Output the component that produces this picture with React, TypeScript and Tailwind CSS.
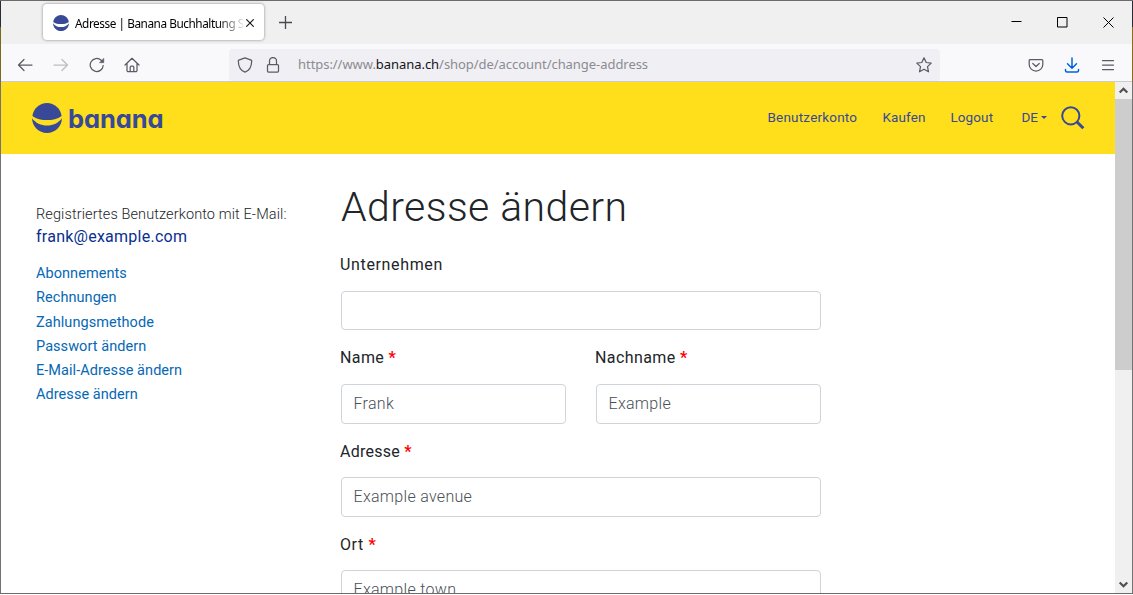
import type { ReactNode } from 'react';

const navLinks = ['Abonnements', 'Rechnungen', 'Zahlungsmethode', 'Passwort ändern', 'E-Mail-Adresse ändern', 'Adresse ändern'];

function Globe({ className }: { className: string }) {
  return (
    <svg viewBox="0 0 30 30" className={className} fill="#374997">
      <path d="M.4 12.9C1.4 5.5 7.6 0 15 0s13.600 5.500 14.600 12.900C25.500 15.900 20.500 17.100 15 17.100S4.500 15.900.4 12.900z" />
      <path d="M0 15.300C3.600 20 9 22.600 15 22.600s11.400-2.600 15-7.300C29.800 23.500 23.200 30 15 30S.2 23.500 0 15.300z" />
    </svg>
  );
}

function Icon({ children, className }: { children: ReactNode; className: string }) {
  return (
    <svg viewBox="0 0 16 16" fill="none" stroke="currentColor" strokeWidth="1.25" strokeLinecap="round" strokeLinejoin="round" className={`size-4 shrink-0 ${className}`}>
      {children}
    </svg>
  );
}

function TitleBar() {
  return (
    <div className="flex h-[43px] shrink-0 items-start bg-[#f0f0f0]">
      <div className="ml-[42px] mt-[3px] flex h-9 w-[221px] items-center rounded bg-white pl-[10px] shadow-[0_0_3px_rgba(0,0,0,0.45)]">
        <Globe className="mt-px size-4 shrink-0" />
        <div className="ml-[6px] mt-[3px] w-[168px] whitespace-nowrap bg-linear-to-r from-black from-85% to-black/10 bg-clip-text font-['Noto_Sans'] text-[11.800px] tracking-[-0.450px] text-transparent">
          Adresse | Banana Buchhaltung S
        </div>
        <svg viewBox="0 0 8 8" className="ml-[3px] mt-[2px] size-2 shrink-0" stroke="#15141a" strokeWidth="1.1"><path d="M.3.3l7.400 7.400M7.700.3L.3 7.700" /></svg>
      </div>
      <svg viewBox="0 0 12 12" className="ml-[15px] mt-[15px] size-[13px]" stroke="#4a4a53" strokeWidth="1.200"><path d="M6 0v12M0 6h12" /></svg>
      <div className="ml-auto mr-[18px] mt-4 flex gap-[35px]">
        <svg viewBox="0 0 11 11" className="size-[11px]" stroke="#000"><path d="M.5 4.500h10" /></svg>
        <svg viewBox="0 0 11 11" className="size-[11px]" stroke="#000" fill="none"><path d="M.5.5h9.500v9.500H.5z" /></svg>
        <svg viewBox="0 0 11 11" className="size-[11px]" stroke="#000"><path d="M.5.5l10 10M10.500.5l-10 10" /></svg>
      </div>
    </div>
  );
}

function Toolbar() {
  return (
    <div className="flex h-[38px] shrink-0 items-center border-b border-[#ccccd0] bg-[#f9f9fb] pt-[4px] text-[#5b5b66]">
      <Icon className="ml-4"><path d="M15 8H1.500M7 2.500L1.500 8L7 13.500" /></Icon>
      <Icon className="ml-5 text-[#bdbdc2]"><path d="M1 8h13.500M9 2.500L14.500 8L9 13.500" /></Icon>
      <Icon className="ml-5"><path d="M14.200 8.500a6.500 6.500 0 1 1-2-5.200L13.500 4.600" /><path d="M14.800 1.500v4.200h-4.200z" fill="currentColor" strokeWidth=".5" /></Icon>
      <Icon className="ml-[19px]"><path d="M1 8l7-6.700L15 8M3 6.500v7a1.200 1.200 0 0 0 1.200 1.200h7.600a1.200 1.200 0 0 0 1.200-1.200v-7M6.200 14.500V10.200a1 1 0 0 1 1-1h1.600a1 1 0 0 1 1 1v4.300" /></Icon>
      <div className="ml-[89px] flex h-8 w-[711px] items-center rounded bg-[#f0f0f4] pl-2">
        <Icon className=""><path d="M8 .8l6.200 2.400a.8.8 0 0 1 .5.8C14.600 9.500 12.500 13.500 8 15.200C3.500 13.500 1.400 9.500 1.300 4a.8.8 0 0 1 .5-.8z" /></Icon>
        <Icon className="ml-3"><path d="M4.500 7V4a3.500 3.500 0 0 1 7 0v3M3.500 7.500h9a1 1 0 0 1 1 1v5.500a1 1 0 0 1-1 1h-9a1 1 0 0 1-1-1V8.500a1 1 0 0 1 1-1z" /></Icon>
        <div className="ml-[17px] whitespace-nowrap font-['Noto_Sans'] text-[13px] tracking-[-0.050px] text-[#8b8b92]">
          https://www.<span className="text-[#15141a]">banana.ch</span>/shop/de/account/change-address
        </div>
        <Icon className="ml-auto mr-2"><path d="M8 .8l2.200 4.700 5 .6-3.700 3.500 1 5.200L8 12.200l-4.500 2.600 1-5.200L.8 6.100l5-.6z" /></Icon>
      </div>
      <Icon className="ml-[88px]"><path d="M2.200 2.500h11.600a1 1 0 0 1 1 1V7.500a6.800 6.500 0 0 1-13.600 0V3.500a1 1 0 0 1 1-1zM4.800 6.500L8 9.500l3.200-3" /></Icon>
      <Icon className="ml-5 text-[#0061e0]"><path d="M8 1v10M3.500 6.800L8 11.200l4.500-4.400M1.500 12.500v1a1.500 1.500 0 0 0 1.500 1.500h10a1.500 1.500 0 0 0 1.500-1.500v-1" strokeWidth="1.500" /></Icon>
      <Icon className="ml-5"><path d="M2.500 3.500h11M2.500 8h11M2.500 12.500h11" /></Icon>
    </div>
  );
}

function SiteHeader() {
  return (
    <header className="flex h-[72px] shrink-0 items-center bg-[#ffdf1b] text-[13.500px] text-[#374997]">
      <Globe className="ml-[31px] size-[30px]" />
      <span className="ml-[6px] pt-[2px] font-['Inter',sans-serif] text-[25.500px] leading-[30px] font-bold tracking-[-0.100px] [font-feature-settings:'cv11']">banana</span>
      <nav className="ml-auto flex items-center pb-[2px] font-['Roboto',sans-serif] font-[380] whitespace-nowrap">
        <span className="w-[115px] tracking-[0.200px]">Benutzerkonto</span>
        <span className="w-[68px] tracking-[0.100px]">Kaufen</span>
        <span className="w-[71px] tracking-[0.100px]">Logout</span>
        <span>DE</span>
        <svg viewBox="0 0 6 3" className="ml-[3px] h-[3px] w-[6px]" fill="#374997"><path d="M0 0h6L3 3z" /></svg>
      </nav>
      <svg viewBox="0 0 24 24" className="ml-[14px] mr-[30px] size-6" fill="none" stroke="#374997"><circle cx="9.800" cy="9.800" r="8.600" strokeWidth="2" /><path d="M15.800 15.800l6.500 6.500" strokeWidth="3" /></svg>
    </header>
  );
}

function Field({ label, value, required, first, labelClass = 'pt-px tracking-[0.400px]' }: { label: string; value?: string; required?: boolean; first?: boolean; labelClass?: string }) {
  return (
    <div className="flex h-[93px] flex-1 flex-col">
      <label className={`-ml-px h-[41px] text-[16px] leading-7 font-[380] whitespace-nowrap text-[#212529] ${labelClass}`}>
        {label}{required && <span className="font-bold text-[#f00]"> *</span>}
      </label>
      <div className={`${first ? 'h-[39px]' : 'h-10'} rounded border border-[#ced4da] pl-[11.500px] text-[16px] leading-[37px] font-[330] tracking-[0.300px] text-[#495057]`}>{value}</div>
    </div>
  );
}

function ScrollBar() {
  return (
    <div className="flex w-[17px] shrink-0 flex-col items-center bg-[#f0f0f0]">
      <svg viewBox="0 0 17 17" className="size-[17px] shrink-0" fill="none" stroke="#505050" strokeWidth="2.200"><path d="M4.700 10.500l3.800-3.800 3.800 3.800" /></svg>
      <div className="h-[271px] w-full bg-[#cdcdcd]" />
      <svg viewBox="0 0 17 17" className="mt-auto size-[17px] shrink-0" fill="none" stroke="#505050" strokeWidth="2.200"><path d="M4.700 6.500l3.800 3.800 3.800-3.800" /></svg>
    </div>
  );
}

export default function App() {
  return (
    <div className="flex h-[595px] w-[1133px] flex-col overflow-hidden bg-white font-[Roboto,sans-serif]">
      <div className="h-px shrink-0 bg-[#6b6b6b]" />
      <div className="flex h-[592px] shrink-0">
        <div className="flex w-px shrink-0 flex-col bg-[#737373]">
          <div className="h-[26px] bg-[#2b2b33]" />
          <div className="h-[54px] bg-[#7a6720]" />
        </div>
        <div className="flex w-[1131px] flex-col">
          <TitleBar />
          <Toolbar />
          <div className="flex min-h-0 flex-1">
            <div className="flex w-[1114px] flex-col overflow-hidden">
              <SiteHeader />
              <div className="flex min-h-0 flex-1">
                <aside className="w-[305px] shrink-0 pl-[35px] pt-[50px] whitespace-nowrap">
                  <p className="h-[21px] text-[14.500px] leading-[22px] font-[360] tracking-[0.110px] text-[#212529]">Registriertes Benutzerkonto mit E-Mail:</p>
                  <p className="h-[37px] text-[16px] leading-6 font-[380] tracking-[0.250px] text-[#0a2f91]">frank@example.com</p>
                  <ul className="text-[14.500px] leading-[24.300px] font-[380] tracking-[0.060px] text-[#0568b5]">
                    {navLinks.map((l) => <li key={l}>{l}</li>)}
                  </ul>
                </aside>
                <main className="ml-[35px] w-[480px] shrink-0">
                  <h1 className="h-[96px] pt-[27px] text-[41px] leading-[52px] font-light tracking-[0.420px] whitespace-nowrap text-[#212529]">Adresse ändern</h1>
                  <Field label="Unternehmen" first labelClass="pt-px tracking-[0.650px]" />
                  <div className="flex gap-[30px]">
                    <Field label="Name" value="Frank" required />
                    <Field label="Nachname" value="Example" required />
                  </div>
                  <Field label="Adresse" value="Example avenue" required labelClass="pt-[2px] tracking-[0.250px]" />
                  <Field label="Ort" value="Example town" required labelClass="pt-[2px] tracking-[0.600px]" />
                </main>
              </div>
            </div>
            <ScrollBar />
          </div>
        </div>
        <div className="flex w-px shrink-0 flex-col bg-[#737373]">
          <div className="h-[26px] bg-[#2b2b33]" />
          <div className="h-[54px] bg-[#8a6d1a]" />
        </div>
      </div>
      <div className="h-px shrink-0 bg-[#6b6b6b]" />
    </div>
  );
}
